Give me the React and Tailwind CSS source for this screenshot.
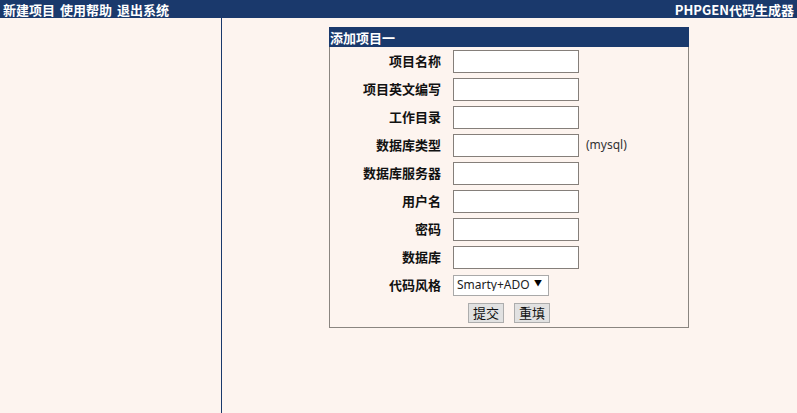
import React, { useState } from 'react';

const fields = [
    { label: '项目名称', name: 'name' },
    { label: '项目英文编写', name: 'alias' },
    { label: '工作目录', name: 'dir' },
    { label: '数据库类型', name: 'dbtype', hint: '(mysql)' },
    { label: '数据库服务器', name: 'dbhost' },
    { label: '用户名', name: 'dbuser' },
    { label: '密码', name: 'dbpass', type: 'password' },
    { label: '数据库', name: 'dbname' },
];

const cjk = { fontFamily: '"Noto Sans CJK SC", "Noto Sans", sans-serif' };

const App = () => {
    const [values, setValues] = useState({});
    const [style, setStyle] = useState('smarty_ado');

    const handleReset = () => {
        setValues({});
        setStyle('smarty_ado');
    };

    return (
        <div className="h-screen flex flex-col bg-[#fdf4ef] text-[13px]" style={cjk}>
            {/* top menu bar */}
            <div className="h-[18px] bg-[#1a396c] text-white font-bold flex items-center justify-between px-[3px] leading-none">
                <div className="flex gap-[5px]">
                    <a href="#">新建项目</a>
                    <a href="#">使用帮助</a>
                    <a href="#">退出系统</a>
                </div>
                <span>PHPGEN代码生成器</span>
            </div>

            <div className="flex flex-1">
                {/* left menu column */}
                <div className="w-[222px] border-r border-[#1a396c]"></div>

                {/* main area */}
                <div className="flex-1 flex justify-center pt-[9px] pr-[1px]">
                    <form
                        className="w-[360px] self-start border border-[#8a8580] border-t-0"
                        onSubmit={(e) => e.preventDefault()}
                    >
                        <div className="h-[20px] bg-[#1a396c] text-white font-bold flex items-center px-[1px] -mx-px leading-none">
                            添加项目一
                        </div>

                        <div className="grid grid-cols-[118px_1fr]">
                            {fields.map((f) => (
                                <React.Fragment key={f.name}>
                                    <div className="h-[28px] flex items-center justify-end pr-[7px] font-bold text-[#111]">
                                        {f.label}
                                    </div>
                                    <div className="h-[28px] flex items-center pl-[5px] gap-[7px]">
                                        <input
                                            type={f.type || 'text'}
                                            value={values[f.name] || ''}
                                            onChange={(e) => setValues({ ...values, [f.name]: e.target.value })}
                                            className="w-[126px] h-[23px] bg-white border border-[#857f7a] outline-none px-1"
                                        />
                                        {f.hint && (
                                            <span className="text-[12px] text-[#333]" style={{ fontFamily: '"Noto Sans", sans-serif' }}>
                                                {f.hint}
                                            </span>
                                        )}
                                    </div>
                                </React.Fragment>
                            ))}

                            <div className="h-[28px] flex items-center justify-end pr-[7px] font-bold text-[#111]">
                                代码风格
                            </div>
                            <div className="h-[28px] flex items-center pl-[5px]">
                                <div className="relative">
                                    <select
                                        value={style}
                                        onChange={(e) => setStyle(e.target.value)}
                                        className="appearance-none w-[96px] h-[21px] bg-white border border-[#a9a9a9] pl-[3px] text-[12px] text-[#222] outline-none leading-none"
                                        style={{ fontFamily: '"Noto Sans", sans-serif' }}
                                    >
                                        <option value="smarty_ado">Smarty+ADO</option>
                                        <option value="php">PHP</option>
                                    </select>
                                    <span className="absolute right-[7px] top-[5px] text-[8px] leading-none text-black pointer-events-none">▼</span>
                                </div>
                            </div>
                        </div>

                        <div className="h-[28px] flex items-center justify-center gap-[10px] pb-[1px]">
                            <button
                                type="submit"
                                className="h-[20px] px-[4px] bg-[#e1e1e1] border border-[#adadad] text-[13px] leading-none text-[#111]"
                            >
                                提交
                            </button>
                            <button
                                type="button"
                                onClick={handleReset}
                                className="h-[20px] px-[4px] bg-[#e1e1e1] border border-[#adadad] text-[13px] leading-none text-[#111]"
                            >
                                重填
                            </button>
                        </div>
                    </form>
                </div>
            </div>
        </div>
    );
};

export default App;
